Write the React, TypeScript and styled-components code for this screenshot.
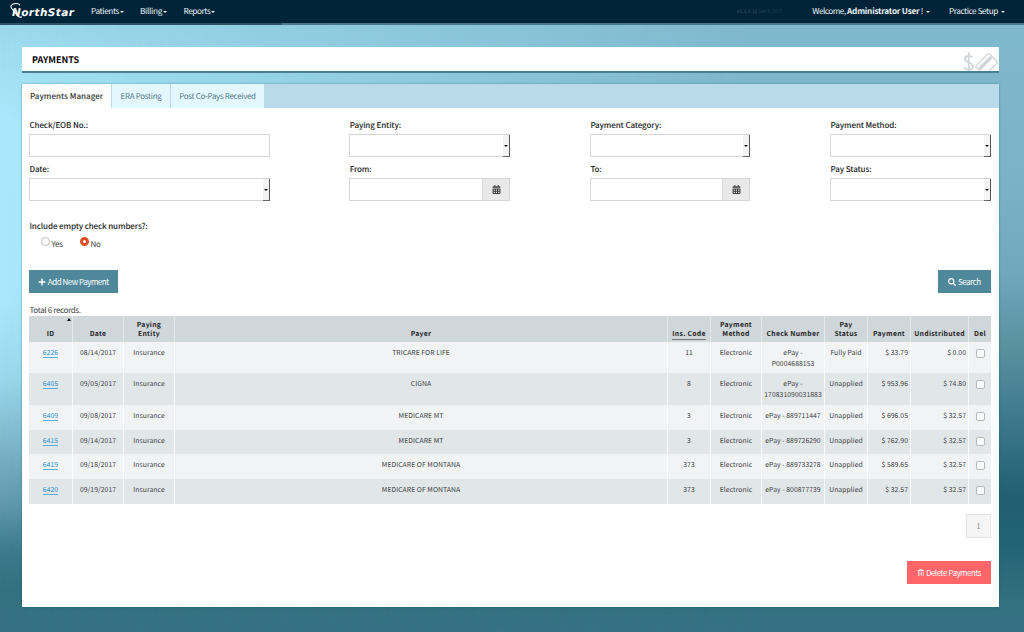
import React from "react";
import styled, { createGlobalStyle, css } from "styled-components";
import { FaPlus, FaSearch, FaRegTrashAlt, FaCalendarAlt } from "react-icons/fa";

const GlobalStyle = createGlobalStyle`
  *, *::before { box-sizing: border-box; }
  body {
    margin: 0;
    font-family: "Noto Sans CJK SC", "Noto Sans", sans-serif;
    font-size: 8px;
    line-height: 11px;
    color: #3c4144;
    text-rendering: geometricPrecision;
  }
`;

const Page = styled.div`
  position: relative;
  isolation: isolate;
  width: 1024px;
  height: 632px;
  overflow: hidden;
  background: linear-gradient(to bottom, #80bacf 0, #7ab2c8 180px, #70a8be 270px, #58909f 350px, #447f92 400px, #205f6f 500px, #226474 545px, #33707f 600px, #367284 632px);
  &::before {
    content: "";
    position: absolute;
    inset: 0;
    z-index: -1;
    background: linear-gradient(to bottom, #96d3e6 0, #a0def1 60px, #a9e8fc 120px, #a9e7fc 300px, #9ad7ec 380px, #76aec3 460px, #5f98ac 505px, #3d7a8d 550px, #33707f 590px, #367284 632px);
    mask-image: linear-gradient(to right, #000 0, rgba(0, 0, 0, 0.55) 350px, transparent 760px);
  }
`;

const Nav = styled.nav`
  position: relative;
  display: flex;
  align-items: center;
  height: 25px;
  padding: 0 19px 0 9px;
  background: linear-gradient(#012236, #00253b);
  border-bottom: 2px solid #47798c;
  color: #eef4f7;
  font-size: 8.2px;
  &::after {
    content: "";
    position: absolute;
    left: 0;
    bottom: -2px;
    width: 282px;
    height: 2px;
    background: #2b5466;
  }
`;

const Logo = styled.svg`
  display: block;
  width: 68px;
  height: 20px;
  margin-right: 14px;
`;

const NavItem = styled.span<{ $gap?: number; $spacing?: number }>`
  display: flex;
  align-items: center;
  white-space: pre;
  margin-right: ${(p) => p.$gap ?? 0}px;
  letter-spacing: ${(p) => p.$spacing ?? -0.37}px;
  b { font-weight: 700; letter-spacing: -0.22px; }
`;

const Caret = styled.i<{ $gap?: number }>`
  margin: 1px 0 0 ${(p) => p.$gap ?? 1}px;
  border: 2.5px solid transparent;
  border-top: 2.5px solid currentColor;
  border-bottom: 0;
`;

const Version = styled.span`
  margin-left: auto;
  margin-right: 30px;
  font-size: 4.8px;
  letter-spacing: -0.12px;
  color: #24475a;
  white-space: pre;
`;

const TitleBar = styled.header`
  position: relative;
  display: flex;
  align-items: center;
  height: 26px;
  margin: 22px 25px 11px 22px;
  padding: 0 0 0 10px;
  overflow: hidden;
  background: #fff;
  border-bottom: 2px solid #4a8092;
  color: #050505;
  &::after {
    content: "";
    position: absolute;
    left: 0;
    bottom: -2px;
    width: 268px;
    height: 2px;
    background: #265867;
  }
`;

const Title = styled.h1`
  margin: 0;
  font-size: 9px;
  font-weight: 700;
`;

const Watermark = styled.svg`
  position: absolute;
  right: 0;
  top: 4px;
  width: 38px;
  height: 24px;
`;

const Panel = styled.main`
  height: 523px;
  margin: 0 25px 0 22px;
  background: #fff;
  box-shadow: 0 0 2px rgba(20, 70, 90, 0.45);
`;

const Tabs = styled.div`
  display: flex;
  gap: 1px;
  height: 24px;
  background: #b9dae8;
`;

const Tab = styled.div<{ $active?: boolean; $width: number }>`
  display: flex;
  align-items: center;
  justify-content: center;
  width: ${(p) => p.$width}px;
  background: ${(p) => (p.$active ? "#fff" : "#e3f7fe")};
  color: ${(p) => (p.$active ? "#333" : "#567b87")};
  font-size: 8px;
  letter-spacing: -0.32px;
  white-space: nowrap;
  ${(p) => p.$active && css`font-weight: 500; letter-spacing: 0.02px;`}
`;

const Body = styled.div`
  display: flex;
  flex-direction: column;
  padding: 12px 8px 0 7px;
`;

const Filters = styled.div`
  display: grid;
  grid-template-columns: 240.5px 161px 160.5px 161px;
  justify-content: start;
  column-gap: 79.7px;
  row-gap: 7px;
`;

const Field = styled.div`
  display: flex;
  flex-direction: column;
  gap: 3px;
`;

const Label = styled.label`
  padding-left: 0.5px;
  font-size: 8px;
  line-height: 11px;
  font-weight: 500;
  letter-spacing: -0.1px;
  color: #222;
  white-space: nowrap;
`;

const Control = styled.div`
  display: flex;
  justify-content: flex-end;
  height: 23px;
  border: 1px solid #d6d6d6;
  background: #fff;
`;

const SelectButton = styled.span`
  display: flex;
  align-items: center;
  justify-content: center;
  width: 7px;
  height: 22px;
  margin-right: -1px;
  background: #f3f3f3;
  border-right: 1px solid #555;
  border-bottom: 1px solid #666;
  &::after {
    content: "";
    border: 2px solid transparent;
    border-top: 2px solid #111;
    border-bottom: 0;
  }
`;

const CalendarButton = styled.span`
  display: flex;
  align-items: center;
  justify-content: center;
  width: 27px;
  background: #e9e9e9;
  border-left: 1px solid #dcdcdc;
  color: #444;
  font-size: 9px;
`;

const Question = styled.div`
  margin-top: 20px;
`;

const Radios = styled.div`
  display: flex;
  height: 12px;
  margin: 5px 0 0 11.5px;
`;

const Radio = styled.span<{ $checked?: boolean }>`
  display: flex;
  gap: 2px;
  width: 39px;
  line-height: 16px;
  letter-spacing: -0.3px;
  &::before {
    content: "";
    width: 9px;
    height: 9px;
    border-radius: 50%;
    border: ${(p) => (p.$checked ? "3px solid #dc4f25" : "1px solid #bbb")};
    background: #fff;
  }
`;

const ButtonRow = styled.div<{ $top: number }>`
  display: flex;
  justify-content: space-between;
  margin-top: ${(p) => p.$top}px;
`;

const Button = styled.button<{ $width: number; $danger?: boolean }>`
  display: flex;
  align-items: center;
  justify-content: center;
  gap: 1.5px;
  width: ${(p) => p.$width}px;
  height: 23px;
  margin-left: ${(p) => (p.$danger ? "auto" : "0")};
  padding: 0;
  border: 0;
  background: ${(p) => (p.$danger ? "#ff6569" : "#4f879b")};
  color: #fff;
  font: inherit;
  font-size: 8px;
  letter-spacing: -0.48px;
  white-space: nowrap;
`;

const Total = styled.div`
  margin-top: 12px;
  padding-left: 0.5px;
  height: 11px;
  line-height: 11px;
  font-size: 8px;
  letter-spacing: -0.35px;
`;

const Table = styled.table`
  width: 962px;
  table-layout: fixed;
  border-collapse: separate;
  border-spacing: 0;
  font-size: 6.8px;
  letter-spacing: 0.06px;
`;

const HeadCell = styled.th`
  position: relative;
  height: 26px;
  padding: 0 2px 4px;
  vertical-align: bottom;
  background: #d0d7da;
  border-right: 1px solid #e4e9eb;
  color: #1e2326;
  font-weight: 700;
  line-height: 9px;
  letter-spacing: 0.3px;
  text-align: center;
  white-space: pre;
  &:last-child { border-right: 0; }
`;

const SortMark = styled.i`
  position: absolute;
  right: 1px;
  top: 2px;
  border: 2.5px solid transparent;
  border-bottom: 3px solid #111;
  border-top: 0;
`;

const Underlined = styled.span`
  display: inline-block;
  margin-bottom: -2px;
  padding-bottom: 1px;
  border-bottom: 1px solid #777;
`;

const Row = styled.tr<{ $height: number }>`
  height: ${(p) => p.$height}px;
  background: #f2f3f4;
  &:nth-child(even) { background: #e1e6e9; }
`;

const Cell = styled.td<{ $align?: string }>`
  padding: 5px 2px 0;
  border-right: 1px solid rgba(255, 255, 255, 0.75);
  vertical-align: top;
  text-align: ${(p) => p.$align ?? "center"};
  white-space: pre;
  line-height: 11px;
  &:last-child { border-right: 0; }
`;

const IdLink = styled.a`
  display: inline-block;
  height: 11px;
  border-bottom: 1px solid #5aaede;
  color: #2790cf;
`;

const Check = styled.span`
  display: block;
  width: 9px;
  height: 9px;
  margin: 2px auto 0;
  border: 1px solid #b5b9bb;
  border-radius: 2px;
  background: #fff;
`;

const Pager = styled.div`
  display: flex;
  align-items: center;
  justify-content: center;
  width: 25px;
  height: 24px;
  margin: 10px 0 0 auto;
  border: 1px solid #e4e4e4;
  background: #f5f5f5;
  color: #999;
`;

const columns = [44, 51, 51, 493, 43, 51, 63, 43, 43, 58, 22];

const rows = [
  { h: 31, id: "6226", date: "08/14/2017", payer: "TRICARE FOR LIFE", code: "11", check: "ePay -\nP0004688153", status: "Fully Paid", pay: "$ 33.79", rest: "$ 0.00" },
  { h: 32, id: "6405", date: "09/05/2017", payer: "CIGNA", code: "8", check: "ePay -\n170831090031883", status: "Unapplied", pay: "$ 953.96", rest: "$ 74.80" },
  { h: 25, id: "6409", date: "09/08/2017", payer: "MEDICARE MT", code: "3", check: "ePay - 889711447", status: "Unapplied", pay: "$ 696.05", rest: "$ 32.57" },
  { h: 24, id: "6415", date: "09/14/2017", payer: "MEDICARE MT", code: "3", check: "ePay - 889726290", status: "Unapplied", pay: "$ 762.90", rest: "$ 32.57" },
  { h: 25, id: "6419", date: "09/18/2017", payer: "MEDICARE OF MONTANA", code: "373", check: "ePay - 889733278", status: "Unapplied", pay: "$ 589.65", rest: "$ 32.57" },
  { h: 25, id: "6420", date: "09/19/2017", payer: "MEDICARE OF MONTANA", code: "373", check: "ePay - 800877739", status: "Unapplied", pay: "$ 32.57", rest: "$ 32.57" },
];

type FieldKind = "text" | "select" | "date";

const fields: { label: string; kind: FieldKind }[] = [
  { label: "Check/EOB No.:", kind: "text" },
  { label: "Paying Entity:", kind: "select" },
  { label: "Payment Category:", kind: "select" },
  { label: "Payment Method:", kind: "select" },
  { label: "Date:", kind: "select" },
  { label: "From:", kind: "date" },
  { label: "To:", kind: "date" },
  { label: "Pay Status:", kind: "select" },
];

export default function App() {
  return (
    <>
      <GlobalStyle />
      <Page>
        <Nav>
          <Logo viewBox="0 0 68 20">
            <text x="3" y="13.6" fill="#fff" fontFamily="DejaVu Sans" fontWeight="700" fontStyle="oblique" fontSize="10.5" textLength="62">NorthStar</text>
            <path d="M11 3C8 .3 1.600 1.800 2 5c.3 2.400 3.200 3.200 4.500 6 1.200 2.700 3.500 4.500 6.500 4" fill="none" stroke="#fff" strokeWidth="1.100" />
          </Logo>
          <NavItem $gap={16}>Patients<Caret /></NavItem>
          <NavItem $gap={16.5} $spacing={-0.3}>Billing<Caret /></NavItem>
          <NavItem $spacing={-0.42}>Reports<Caret /></NavItem>
          <Version><b>v1.3.0.12</b> Dec 5, 2017</Version>
          <NavItem $gap={19} $spacing={-0.48}>Welcome, <b>Administrator User</b> !<Caret $gap={3} /></NavItem>
          <NavItem $spacing={-0.42}>Practice Setup<Caret $gap={3} /></NavItem>
        </Nav>
        <TitleBar>
          <Title>PAYMENTS</Title>
          <Watermark viewBox="0 0 38 24" fill="none" stroke="#cfd5d8">
            <path d="M11.500 6.500C10 4.500 4 4 4 8c0 4 8 3 8 7.500 0 4-7 4-9 1M7.800 1.500v18.500" strokeWidth="1.800" />
            <g transform="rotate(-45 26 13)">
              <rect x="16" y="6.500" width="19" height="13" rx="1.500" strokeWidth="1.300" />
              <path d="M17 11.200h17" strokeWidth="3.600" />
            </g>
          </Watermark>
        </TitleBar>
        <Panel>
          <Tabs>
            <Tab $active $width={89}>Payments Manager</Tab>
            <Tab $width={58}>ERA Posting</Tab>
            <Tab $width={93}>Post Co-Pays Received</Tab>
          </Tabs>
          <Body>
            <Filters>
              {fields.map((f) => (
                <Field key={f.label}>
                  <Label>{f.label}</Label>
                  <Control>
                    {f.kind === "select" && <SelectButton />}
                    {f.kind === "date" && <CalendarButton><FaCalendarAlt /></CalendarButton>}
                  </Control>
                </Field>
              ))}
            </Filters>
            <Question>
              <Label>Include empty check numbers?:</Label>
              <Radios>
                <Radio>Yes</Radio>
                <Radio $checked>No</Radio>
              </Radios>
            </Question>
            <ButtonRow $top={21}>
              <Button $width={89}><FaPlus size={8} />Add New Payment</Button>
              <Button $width={53}><FaSearch size={8} />Search</Button>
            </ButtonRow>
            <Total>Total 6 records.</Total>
            <Table>
              <colgroup>
                {columns.map((w, i) => <col key={i} width={w} />)}
              </colgroup>
              <thead>
                <tr>
                  <HeadCell>ID<SortMark /></HeadCell>
                  <HeadCell>Date</HeadCell>
                  <HeadCell>{"Paying\nEntity"}</HeadCell>
                  <HeadCell>Payer</HeadCell>
                  <HeadCell><Underlined>Ins. Code</Underlined></HeadCell>
                  <HeadCell>{"Payment\nMethod"}</HeadCell>
                  <HeadCell>Check Number</HeadCell>
                  <HeadCell>{"Pay\nStatus"}</HeadCell>
                  <HeadCell>Payment</HeadCell>
                  <HeadCell>Undistributed</HeadCell>
                  <HeadCell>Del</HeadCell>
                </tr>
              </thead>
              <tbody>
                {rows.map((r) => (
                  <Row key={r.id} $height={r.h}>
                    <Cell><IdLink>{r.id}</IdLink></Cell>
                    <Cell>{r.date}</Cell>
                    <Cell>Insurance</Cell>
                    <Cell>{r.payer}</Cell>
                    <Cell>{r.code}</Cell>
                    <Cell>Electronic</Cell>
                    <Cell>{r.check}</Cell>
                    <Cell>{r.status}</Cell>
                    <Cell $align="right">{r.pay}</Cell>
                    <Cell $align="right">{r.rest}</Cell>
                    <Cell><Check /></Cell>
                  </Row>
                ))}
              </tbody>
            </Table>
            <Pager>1</Pager>
            <ButtonRow $top={23}>
              <Button $danger $width={84}><FaRegTrashAlt size={7.5} />Delete Payments</Button>
            </ButtonRow>
          </Body>
        </Panel>
      </Page>
    </>
  );
}
